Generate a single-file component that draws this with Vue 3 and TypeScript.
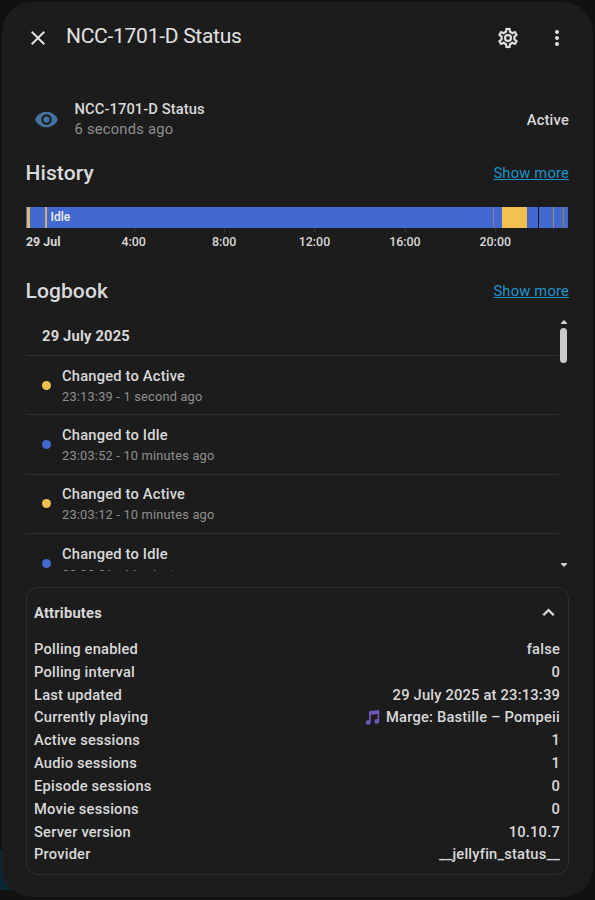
<script setup lang="ts">
interface Segment { color: string; start: number; width: number }
interface Entry { state: 'Active' | 'Idle'; time: string }
interface Attribute { name: string; value: string; music?: boolean }

const segments: Segment[] = [
  { color: '#e6b95c', start: 1, width: 3 },
  { color: '#d0ad78', start: 19, width: 1.5 },
  { color: '#8d7a8a', start: 467, width: 1 },
  { color: '#f3bf4e', start: 476, width: 24.5 },
  { color: '#111111', start: 512, width: 1 },
  { color: '#b08a58', start: 527, width: 1 },
  { color: '#a67c3c', start: 537, width: 1 },
]
const ticks: string[] = ['4:00', '8:00', '12:00', '16:00', '20:00']
const entries: Entry[] = [
  { state: 'Active', time: '23:13:39 - 1 second ago' },
  { state: 'Idle', time: '23:03:52 - 10 minutes ago' },
  { state: 'Active', time: '23:03:12 - 10 minutes ago' },
  { state: 'Idle', time: '23:02:21 - 11 minutes ago' },
]
const attributes: Attribute[] = [
  { name: 'Polling enabled', value: 'false' },
  { name: 'Polling interval', value: '0' },
  { name: 'Last updated', value: '29 July 2025 at 23:13:39' },
  { name: 'Currently playing', value: 'Marge: Bastille – Pompeii', music: true },
  { name: 'Active sessions', value: '1' },
  { name: 'Audio sessions', value: '1' },
  { name: 'Episode sessions', value: '0' },
  { name: 'Movie sessions', value: '0' },
  { name: 'Server version', value: '10.10.7' },
  { name: 'Provider', value: '__jellyfin_status__' },
]
</script>

<template>
  <div class="page">
    <main class="dialog">
      <header class="header">
        <svg class="icon close" viewBox="0 0 24 24"><path d="M19,6.41L17.59,5L12,10.59L6.41,5L5,6.41L10.59,12L5,17.59L6.41,19L12,13.41L17.59,19L19,17.59L13.41,12L19,6.41Z" /></svg>
        <h1>NCC-1701-D Status</h1>
        <svg class="icon gear" viewBox="0 0 24 24"><path d="M12,8A4,4 0 0,1 16,12A4,4 0 0,1 12,16A4,4 0 0,1 8,12A4,4 0 0,1 12,8M12,10A2,2 0 0,0 10,12A2,2 0 0,0 12,14A2,2 0 0,0 14,12A2,2 0 0,0 12,10M10,22C9.75,22 9.54,21.82 9.5,21.58L9.13,18.93C8.5,18.68 7.96,18.34 7.44,17.94L4.95,18.95C4.73,19.03 4.46,18.95 4.34,18.73L2.34,15.27C2.21,15.05 2.27,14.78 2.46,14.63L4.57,12.97L4.5,12L4.57,11L2.46,9.37C2.27,9.22 2.21,8.95 2.34,8.73L4.34,5.27C4.46,5.05 4.73,4.96 4.95,5.05L7.44,6.05C7.96,5.66 8.5,5.32 9.13,5.07L9.5,2.42C9.54,2.18 9.75,2 10,2H14C14.25,2 14.46,2.18 14.5,2.42L14.87,5.07C15.5,5.32 16.04,5.66 16.56,6.05L19.05,5.05C19.27,4.96 19.54,5.05 19.66,5.27L21.66,8.73C21.79,8.95 21.73,9.22 21.54,9.37L19.43,11L19.5,12L19.43,13L21.54,14.63C21.73,14.78 21.79,15.05 21.66,15.27L19.66,18.73C19.54,18.95 19.27,19.04 19.05,18.95L16.56,17.95C16.04,18.34 15.5,18.68 14.87,18.93L14.5,21.58C14.46,21.82 14.25,22 14,22H10M11.25,4L10.88,6.61C9.68,6.86 8.62,7.5 7.85,8.39L5.44,7.35L4.69,8.65L6.8,10.2C6.4,11.37 6.4,12.64 6.8,13.8L4.68,15.36L5.43,16.66L7.86,15.62C8.63,16.5 9.68,17.14 10.87,17.38L11.24,20H12.76L13.13,17.39C14.32,17.14 15.37,16.5 16.14,15.62L18.57,16.66L19.32,15.36L17.2,13.81C17.6,12.64 17.6,11.37 17.2,10.2L19.31,8.65L18.56,7.35L16.15,8.39C15.38,7.5 14.32,6.86 13.12,6.62L12.75,4H11.25Z" /></svg>
        <svg class="icon dots" viewBox="0 0 24 24"><path d="M12,16A2,2 0 0,1 14,18A2,2 0 0,1 12,20A2,2 0 0,1 10,18A2,2 0 0,1 12,16M12,10A2,2 0 0,1 14,12A2,2 0 0,1 12,14A2,2 0 0,1 10,12A2,2 0 0,1 12,10M12,4A2,2 0 0,1 14,6A2,2 0 0,1 12,8A2,2 0 0,1 10,6A2,2 0 0,1 12,4Z" /></svg>
      </header>

      <section class="state">
        <svg class="icon eye" viewBox="0 0 24 24"><path d="M12,9A3,3 0 0,0 9,12A3,3 0 0,0 12,15A3,3 0 0,0 15,12A3,3 0 0,0 12,9M12,17A5,5 0 0,1 7,12A5,5 0 0,1 12,7A5,5 0 0,1 17,12A5,5 0 0,1 12,17M12,4.5C7,4.5 2.73,7.61 1,12C2.73,16.39 7,19.5 12,19.5C17,19.5 21.27,16.39 23,12C21.27,7.61 17,4.5 12,4.5Z" /></svg>
        <div class="info">
          <div class="name">NCC-1701-D Status</div>
          <div class="ago">6 seconds ago</div>
        </div>
        <div class="value">Active</div>
      </section>

      <section class="history">
        <div class="section-head"><h2>History</h2><a>Show more</a></div>
        <div class="timeline">
          <span class="timeline-label">Idle</span>
          <i v-for="s in segments" :key="s.start" class="segment" :style="{ left: s.start + 'px', width: s.width + 'px', background: s.color }" />
        </div>
        <div class="axis">
          <span class="day">29 Jul</span>
          <span v-for="t in ticks" :key="t" class="tick">{{ t }}</span>
        </div>
      </section>

      <section class="logbook">
        <div class="section-head"><h2>Logbook</h2><a>Show more</a></div>
        <div class="log">
          <div class="entries">
            <div class="date">29 July 2025</div>
            <div v-for="e in entries" :key="e.time" class="entry">
              <i class="dot" :class="e.state.toLowerCase()" />
              <div>
                <div class="message">Changed to {{ e.state }}</div>
                <div class="time">{{ e.time }}</div>
              </div>
            </div>
          </div>
          <div class="scrollbar">
            <svg viewBox="0 0 6 4"><path d="M0 4V3L3 0L6 3V4Z" /></svg>
            <i class="thumb" />
            <svg class="down" viewBox="0 0 6 4"><path d="M0 0V1L3 4L6 1V0Z" /></svg>
          </div>
        </div>
      </section>

      <section class="attributes">
        <div class="attributes-head">
          <span>Attributes</span>
          <svg class="icon chevron" viewBox="0 0 24 24"><path d="M7.41,15.41L12,10.83L16.59,15.41L18,14L12,8L6,14L7.41,15.41Z" /></svg>
        </div>
        <div v-for="a in attributes" :key="a.name" class="attribute">
          <span>{{ a.name }}</span>
          <span class="attribute-value">
            <svg v-if="a.music" class="music" viewBox="0 0 16 16"><path d="M4.3 1.2L15.2 0V12.2A2.6 2.4 0 1 1 13.4 9.9V4.3L6.1 5V13.3A2.6 2.4 0 1 1 4.3 11Z" /></svg>
            {{ a.value }}
          </span>
        </div>
      </section>
    </main>
  </div>
</template>

<style>
body { background: #111111; }
</style>

<style scoped>
* { box-sizing: border-box; }
.page {
  height: 900px;
  padding: 2px 2px 3px;
  overflow: hidden;
  background: linear-gradient(#0d2431, #0d2431) 0 850px / 30px 40px no-repeat, #111111;
  font-family: Roboto, "Liberation Sans", sans-serif;
  font-size: 14.7px;
  font-weight: 500;
  letter-spacing: 0.2px;
  color: #d9d9d9;
}
.dialog {
  height: 895px;
  padding: 0 24px;
  border-radius: 30px;
  background: #1c1c1c;
}
.icon { display: block; flex: none; fill: currentColor; }
.header { display: flex; height: 72px; align-items: center; color: #e1e1e1; }
.close { width: 24px; height: 24px; }
h1 { flex: 1; margin: 0 0 4px 16px; font-size: 21px; line-height: 30px; font-weight: 400; letter-spacing: -0.27px; }
.gear { width: 24px; height: 24px; stroke: currentColor; stroke-width: 0.2; }
.dots { width: 24px; height: 24px; margin: 0 0 0 25px; }
.state { display: flex; align-items: center; height: 44px; margin-top: 24px; }
.eye { width: 25px; height: 25px; margin: -1px 0 0 8px; color: #44739e; }
.info { flex: 1; margin: -2px 0 0 15.5px; line-height: 20px; }
.name { letter-spacing: 0.1px; }
.ago { color: #8f8f8f; font-weight: 400; letter-spacing: 0.25px; }
.section-head { display: flex; align-items: center; justify-content: space-between; height: 28px; }
h2 { margin: 0 0 0 -0.5px; font-size: 21px; line-height: 28px; font-weight: 500; letter-spacing: 0.1px; }
a { color: #1e94ca; font-weight: 400; letter-spacing: 0.2px; text-decoration: underline; }
.history { margin-top: 17px; }
.timeline { position: relative; height: 21px; margin: 20px 1px 0 0; background: #4269d0; overflow: hidden; }
.timeline-label { display: block; padding-left: 24.5px; font-size: 12px; line-height: 20px; color: #f0f0f0; letter-spacing: 0; }
.segment { position: absolute; top: 0; bottom: 0; }
.axis { display: flex; height: 25px; padding-top: 5px; font-size: 12.4px; line-height: 17px; letter-spacing: 0; }
.day { width: 62.5px; font-weight: 700; }
.tick { position: relative; width: 90.4px; text-align: center; }
.tick::before { content: ""; position: absolute; top: -5px; left: 45px; width: 1px; height: 4px; background: #333333; }
.logbook { margin-top: 24px; }
.log { display: flex; height: 254px; margin-top: 12px; overflow: hidden; }
.entries { flex: 1; overflow: hidden; }
.date { height: 38px; padding: 8px 16px 0; line-height: 22px; font-weight: 700; }
.entry { display: flex; align-items: center; height: 59.4px; padding-left: 16px; border-top: 1px solid #303030; }
.dot { width: 9px; height: 9px; margin-right: 11px; border-radius: 50%; }
.active { background: #f3bf4e; }
.idle { background: #4269d0; }
.message { padding-top: 2px; line-height: 20px; }
.time { padding-top: 1px; color: #8f8f8f; font-size: 12.8px; font-weight: 400; line-height: 20px; }
.scrollbar { display: flex; flex-direction: column; align-items: center; width: 9px; margin-right: 1px; padding: 3px 0 4px; }
.scrollbar svg { width: 6px; height: 4px; fill: #d0d0d0; }
.thumb { width: 7px; height: 35px; margin-top: 4px; border-radius: 4px; background: #c9c9c9; }
.scrollbar .down { margin-top: auto; }
.attributes { height: 288px; margin-top: 16px; padding: 0 8px 0 7px; border: 1px solid #2e2e2e; border-radius: 12px; }
.attributes-head { display: flex; align-items: center; justify-content: space-between; height: 49.4px; font-weight: 700; }
.chevron { width: 23px; height: 23px; stroke: currentColor; stroke-width: 0.5; }
.attribute { display: flex; align-items: center; justify-content: space-between; height: 22.85px; }
.attribute-value { display: flex; align-items: center; }
.music { width: 15px; height: 15px; margin-right: 6px; fill: #7056bd; }
</style>
